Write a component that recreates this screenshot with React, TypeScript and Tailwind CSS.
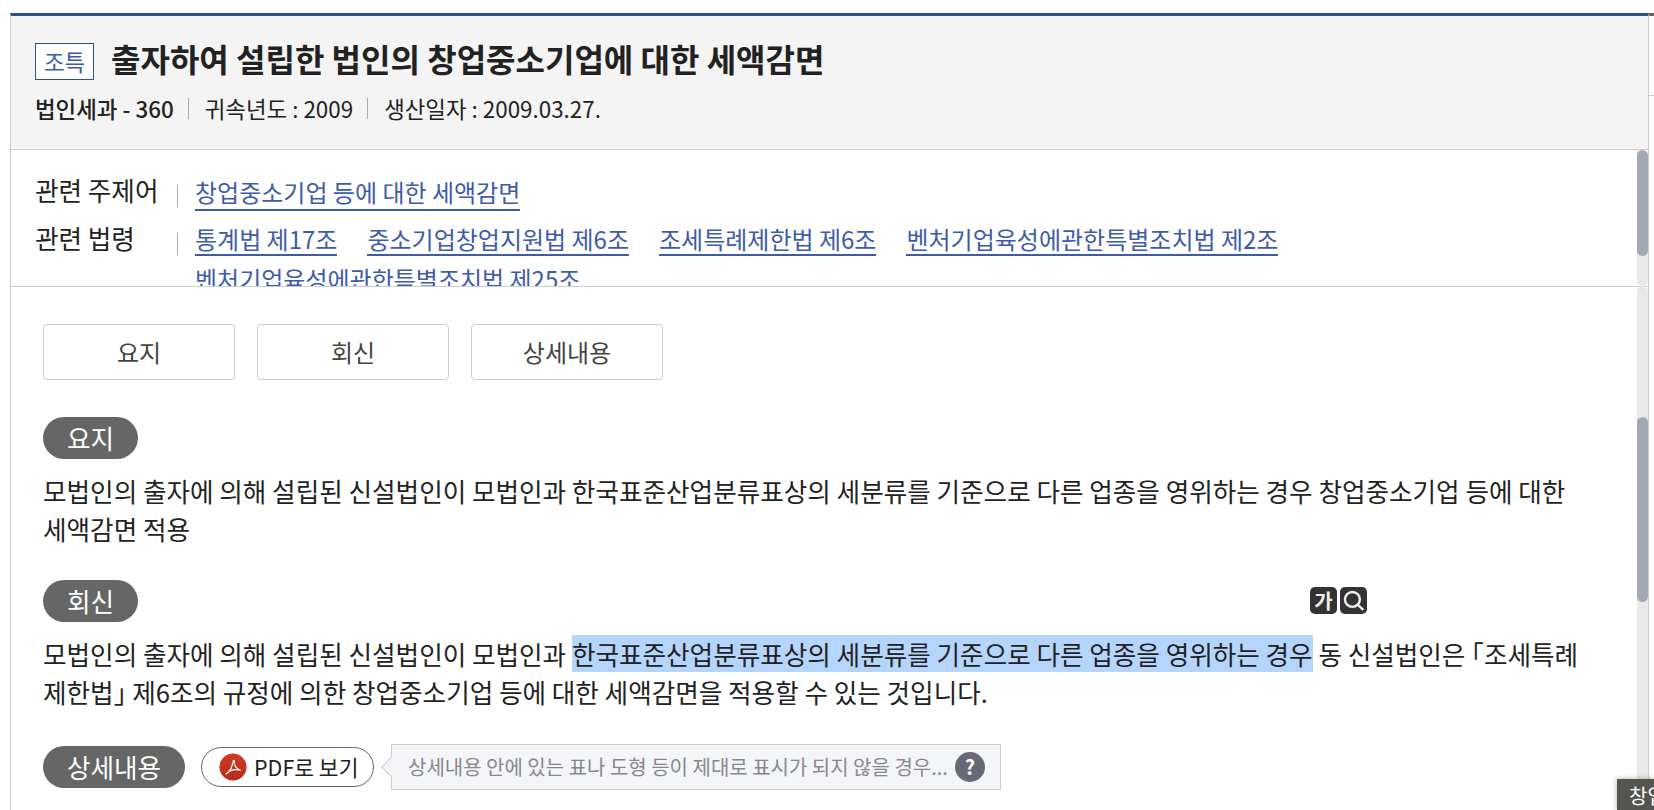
const font = "font-['Noto_Sans_CJK_KR','Noto_Sans',sans-serif]";

const SectionPill = ({ label, className = "" }: { label: string; className?: string }) => (
  <div className={`flex h-[42px] items-center justify-center rounded-full bg-[#666666] text-[25.6px] text-white ${className}`}>
    {label}
  </div>
);

const LawLink = ({ label }: { label: string }) => (
  <a className="border-b-2 border-[#3e5ba9] text-[24px] leading-[30px] text-[#3e5ba9]">{label}</a>
);

const PdfIcon = () => (
  <svg width="28" height="28" viewBox="0 0 30 30">
    <defs>
      <linearGradient id="pdfRed" x1="0" y1="0" x2="0" y2="1">
        <stop offset="0" stopColor="#d23c22" />
        <stop offset="1" stopColor="#b42c18" />
      </linearGradient>
    </defs>
    <circle cx="15" cy="15" r="14.5" fill="url(#pdfRed)" />
    <path
      d="M7.500 22.500c3.500-2 6.500-7 7.500-13 .3-2.500 1.800-2 1.500.5-.5 3.500 2.500 7.500 6.500 8.500-4.500-1-10-.3-12.500 1.500-1.500 1-2.500 2-3 2.500z"
      fill="none"
      stroke="#ffffff"
      strokeWidth="1.300"
      strokeLinejoin="round"
    />
  </svg>
);

const App = () => {
  return (
    <div className={`relative h-[810px] w-[1654px] overflow-hidden bg-white pt-[13px] ${font}`}>
      <div className="h-[797px] w-[1639px] ml-[10px] overflow-hidden border-x border-[#cccccc] border-t-[3px] border-t-[#2b5288]">
        <header className="h-[134px] border-b border-[#cccccc] bg-[#f4f4f4] px-[24px] pt-[24px]">
          <div className="flex items-center">
            <span className="flex h-[37px] w-[59px] items-center justify-center border border-[#2b5288] bg-white text-[22.4px] text-[#3e5ba9]">
              조특
            </span>
            <h1 className="ml-[17px] mb-[6px] text-[32px] font-bold leading-[37px] text-[#222222]">
              출자하여 설립한 법인의 창업중소기업에 대한 세액감면
            </h1>
          </div>
          <div className="mt-[10px] flex items-center text-[22.4px] leading-[30px] text-[#222222]">
            <span className="font-medium">법인세과 - 360</span>
            <span className="ml-[14px] mr-[16px] h-[21px] w-px bg-[#aaaaaa]" />
            <span>귀속년도 : 2009</span>
            <span className="ml-[14px] mr-[16px] h-[21px] w-px bg-[#aaaaaa]" />
            <span>생산일자 : 2009.03.27.</span>
          </div>
        </header>

        <section className="relative h-[137px] overflow-hidden border-b border-[#cccccc] px-[24px] pt-[24px]">
          <div className="flex">
            <span className="w-[142px] text-[25.6px] leading-[32px] text-[#222222]">관련 주제어</span>
            <span className="mt-[11px] h-[22px] w-px bg-[#aaaaaa]" />
            <div className="ml-[17px] mt-[3px]">
              <LawLink label="창업중소기업 등에 대한 세액감면" />
            </div>
          </div>
          <div className="mt-[15px] flex">
            <span className="w-[142px] text-[25.6px] leading-[32px] text-[#222222]">관련 법령</span>
            <span className="mt-[11px] h-[22px] w-px bg-[#aaaaaa]" />
            <div className="ml-[17px] mt-[2px] flex w-[1200px] flex-wrap gap-x-[30px] gap-y-[8px]">
              <LawLink label="통계법 제17조" />
              <LawLink label="중소기업창업지원법 제6조" />
              <LawLink label="조세특례제한법 제6조" />
              <LawLink label="벤처기업육성에관한특별조치법 제2조" />
              <LawLink label="벤처기업육성에관한특별조치법 제25조" />
            </div>
          </div>
          <div className="absolute bottom-0 right-0 top-0 w-[11px] rounded-full bg-[#e9e9e9]">
            <div className="h-[106px] rounded-full bg-[#a2a8b4]" />
          </div>
        </section>

        <main className="relative h-[520px] pl-[32px] pr-[58px] pt-[37px]">
          <div className="flex gap-[22px]">
            {["요지", "회신", "상세내용"].map((tab) => (
              <button
                key={tab}
                className="h-[56px] w-[192px] rounded-[4px] border border-[#cccccc] text-[24px] text-[#444444]"
              >
                {tab}
              </button>
            ))}
          </div>

          <SectionPill label="요지" className="mt-[37px] w-[95px]" />
          <p className="mt-[13px] text-[25.6px] leading-[38px] text-[#222222]">
            모법인의 출자에 의해 설립된 신설법인이 모법인과 한국표준산업분류표상의 세분류를 기준으로 다른 업종을 영위하는 경우 창업중소기업 등에 대한 세액감면 적용
          </p>

          <div className="mt-[32px] flex items-start">
            <SectionPill label="회신" className="w-[95px]" />
            <div className="ml-[1172px] mt-[7px] flex gap-[3px]">
              <span className="flex h-[27px] w-[27px] items-center justify-center rounded-[5px] bg-[#333333] text-[20px] font-bold leading-none text-[#eeeeee]">
                가
              </span>
              <span className="flex h-[27px] w-[27px] items-center justify-center rounded-[5px] bg-[#333333]">
                <svg width="23" height="23" viewBox="0 0 21 21" fill="none" stroke="#eeeeee" strokeWidth="2.200">
                  <circle cx="9.500" cy="9.500" r="6.800" />
                  <path d="M14.500 14.500l5 4.500" />
                </svg>
              </span>
            </div>
          </div>
          <p className="mt-[13px] text-[25.6px] leading-[38px] text-[#222222]">
            모법인의 출자에 의해 설립된 신설법인이 모법인과{" "}
            <span className="bg-[#b6d5fd]">한국표준산업분류표상의 세분류를 기준으로 다른 업종을 영위하는 경우</span> 동 신설법인은{" "}
            <span className="[font-feature-settings:'halt']">「</span>조세특례제한법<span className="[font-feature-settings:'halt']">」</span> 제6조의 규정에 의한 창업중소기업 등에 대한 세액감면을 적용할 수 있는 것입니다.
          </p>

          <div className="mt-[33px] flex items-center">
            <SectionPill label="상세내용" className="w-[142px] shrink-0" />
            <a className="ml-[16px] flex h-[40px] w-[173px] shrink-0 items-center rounded-full border border-[#666666] pl-[17px] text-[21.5px] text-[#222222]">
              <PdfIcon />
              <span className="ml-[7px]">PDF로 보기</span>
            </a>
            <div className="relative ml-[17px] flex h-[46px] w-[610px] shrink-0 items-center border border-[#cccccc] bg-[#f4f5f9] pl-[16px] text-[20px] text-[#888888]">
              <span className="absolute -left-[8px] top-[15px] h-[14px] w-[14px] rotate-45 border-b border-l border-[#cccccc] bg-[#f4f5f9]" />
              <span>상세내용 안에 있는 표나 도형 등이 제대로 표시가 되지 않을 경우...</span>
              <span className="ml-[7px] flex h-[30px] w-[30px] items-center justify-center rounded-full bg-[#666a75] text-[20px] font-bold text-white">
                ?
              </span>
            </div>
          </div>

          <div className="absolute bottom-0 right-0 top-[-1px] w-[11px] rounded-t-full bg-[#e9e9e9]">
            <div className="mt-[131px] h-[185px] rounded-full bg-[#a2a8b4]" />
          </div>
        </main>
      </div>

      <div className="absolute right-0 top-[13px] h-[3px] w-[5px] bg-[#666666]" />
      <div className="absolute right-0 top-[95px] h-px w-[5px] bg-[#cccccc]" />
      <div className="absolute left-[1617px] top-[779px] h-[31px] w-[37px] overflow-hidden whitespace-nowrap bg-[#55554f] pl-[12px] pt-[4px] text-[20px] leading-[26px] text-white shadow-[0_0_6px_rgba(0,0,0,0.3)]">
        창업
      </div>
    </div>
  );
};

export default App;
